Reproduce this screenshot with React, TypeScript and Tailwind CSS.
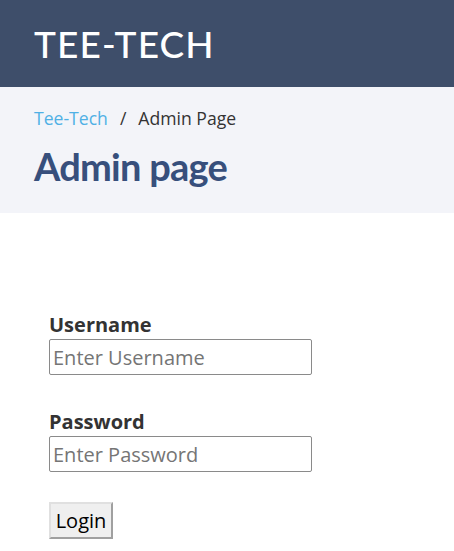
export default function App() {
  return (
    <div className="min-h-screen bg-white font-['Open_Sans',sans-serif]">
      {/* Header */}
      <header className="h-[87px] bg-[#3e4e6a] px-[34px] flex items-center">
        <h1 className="text-white text-[37px] font-medium tracking-[0.03em] font-['Lato',sans-serif] leading-none">
          TEE-TECH
        </h1>
      </header>

      {/* Breadcrumb + title */}
      <section className="h-[126px] bg-[#f3f4f9] px-[34px] pt-[19px]">
        <nav className="flex items-center gap-[12px] text-[17.6px] leading-[24px]">
          <a href="#" className="text-[#4fb0e5]">Tee-Tech</a>
          <span className="text-[#333]">/</span>
          <span className="text-[#333]">Admin Page</span>
        </nav>
        <h2 className="mt-[14px] text-[38px] font-bold leading-[44px] tracking-[-0.02em] text-[#374f7c] font-['Lato',sans-serif]">
          Admin page
        </h2>
      </section>

      {/* Login form */}
      <form className="px-[49px] pt-[98px] flex flex-col items-start" onSubmit={e => e.preventDefault()}>
        <label className="text-[20px] font-bold leading-[28px] text-[#333]">Username</label>
        <input
          type="text"
          placeholder="Enter Username"
          className="w-[263px] h-[36px] border border-[#8a8a8a] rounded-[2px] px-[3px] text-[20px] placeholder:text-[#757575] outline-none"
        />
        <label className="mt-[33px] text-[20px] font-bold leading-[28px] text-[#333]">Password</label>
        <input
          type="password"
          placeholder="Enter Password"
          className="w-[263px] h-[36px] border border-[#8a8a8a] rounded-[2px] px-[3px] text-[20px] placeholder:text-[#757575] outline-none"
        />
        <button
          type="submit"
          className="mt-[30px] h-[37px] w-[64px] text-[20px] text-black bg-[#efefef] border-2 border-t-[#e0e0e0] border-l-[#e0e0e0] border-r-[#a0a0a0] border-b-[#a0a0a0]"
        >
          Login
        </button>
      </form>
    </div>
  );
}
